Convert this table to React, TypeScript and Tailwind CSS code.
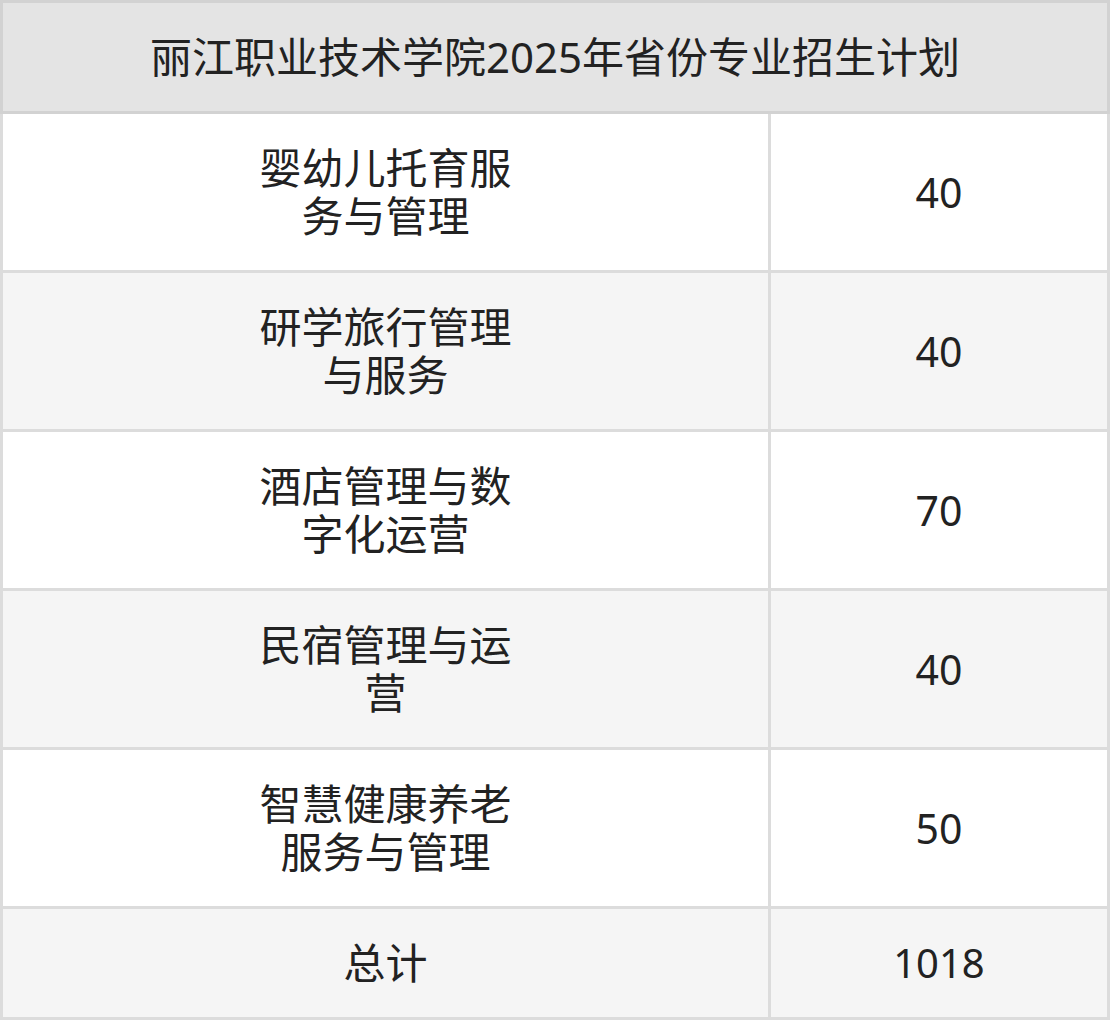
import React from "react";

const rows: { name: string[]; count: string }[] = [
  { name: ["婴幼儿托育服", "务与管理"], count: "40" },
  { name: ["研学旅行管理", "与服务"], count: "40" },
  { name: ["酒店管理与数", "字化运营"], count: "70" },
  { name: ["民宿管理与运", "营"], count: "40" },
  { name: ["智慧健康养老", "服务与管理"], count: "50" },
];

export default function App() {
  return (
    <div
      className="w-[1110px] h-[1020px] bg-[#dcdcdc] p-[3px] grid grid-cols-[765px_336px] grid-rows-[108px_156px_156px_156px_156px_156px_108px] gap-[3px] text-[#222222]"
      style={{ fontFamily: '"Noto Sans", "Noto Sans CJK SC", sans-serif' }}
    >
      <div className="col-span-2 bg-[#e4e4e4] shadow-[0_0_0_3px_#d2d2d2] flex items-center justify-center text-[42px] leading-[48px]">
        丽江职业技术学院2025年省份专业招生计划
      </div>
      {rows.map((r, i) => {
        const bg = i % 2 === 0 ? "bg-white" : "bg-[#f5f5f5]";
        return (
          <React.Fragment key={i}>
            <div className={`${bg} flex flex-col items-center justify-center text-[42px] leading-[48px]`}>
              {r.name.map((l, j) => (
                <div key={j}>{l}</div>
              ))}
            </div>
            <div className={`${bg} flex items-center justify-center text-[41px] leading-[48px]`}>
              {r.count}
            </div>
          </React.Fragment>
        );
      })}
      <div className="bg-[#f5f5f5] flex items-center justify-center text-[42px] leading-[48px]">总计</div>
      <div className="bg-[#f5f5f5] flex items-center justify-center text-[40px] leading-[48px]">1018</div>
    </div>
  );
}
